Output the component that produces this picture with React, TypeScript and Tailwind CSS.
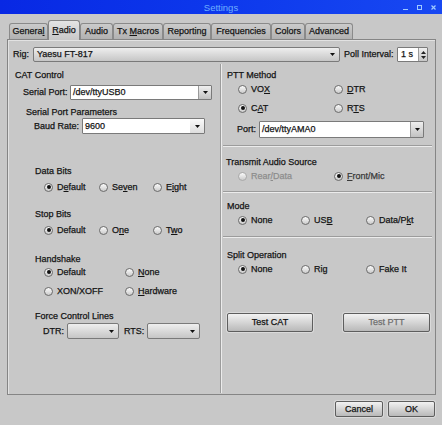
import React from "react";

function U({ children }: { children: React.ReactNode }) {
  return <span className="underline decoration-1 underline-offset-[1px]">{children}</span>;
}

function Arrow({ color = "#111" }: { color?: string }) {
  return (
    <svg width="5" height="3" viewBox="0 0 5 3" className="shrink-0">
      <path d="M0 0H5L2.5 3Z" fill={color} />
    </svg>
  );
}

function Radio({
  checked,
  disabled,
  dim,
  className = "",
  children,
}: {
  checked?: boolean;
  disabled?: boolean;
  dim?: boolean;
  className?: string;
  children: React.ReactNode;
}) {
  return (
    <div className={`flex h-full shrink-0 items-center ${className}`}>
      <span
        className={`flex h-[9px] w-[9px] shrink-0 items-center justify-center rounded-full border bg-linear-to-b from-[#fbfbfb] to-[#cbcbcb] ${
          disabled ? "border-[#a9a9a9]" : "border-[#6b6b6b]"
        }`}
      >
        {checked && <span className="h-[4px] w-[4px] rounded-full bg-[#111]" />}
      </span>
      <span
        className={`ml-[4px] whitespace-nowrap ${
          disabled ? "text-[#8d8d8d]" : dim ? "text-[#3a3a3a]" : ""
        }`}
      >
        {children}
      </span>
    </div>
  );
}

function Combo({ className = "", children }: { className?: string; children?: React.ReactNode }) {
  return (
    <div
      className={`flex shrink-0 items-center justify-between rounded-[2px] border border-[#7a7a7a] bg-linear-to-b from-[#eeeeee] to-[#c6c6c6] pl-[3px] pr-[4px] ${className}`}
    >
      <span className="whitespace-nowrap">{children}</span>
      <Arrow />
    </div>
  );
}

function EditCombo({
  className = "",
  light,
  children,
}: {
  className?: string;
  light?: boolean;
  children?: React.ReactNode;
}) {
  return (
    <div className={`flex shrink-0 rounded-[1px] border border-[#7a7a7a] bg-white ${className}`}>
      <span className="flex flex-1 items-center whitespace-nowrap pl-[2px]">{children}</span>
      {light ? (
        <span className="flex w-[14px] items-center justify-center bg-linear-to-b from-[#fafafa] to-[#dedede]">
          <Arrow />
        </span>
      ) : (
        <span className="flex w-[13px] items-center justify-center border-l border-[#9a9a9a] bg-linear-to-b from-[#efefef] to-[#c2c2c2]">
          <Arrow />
        </span>
      )}
    </div>
  );
}

function Button({
  className = "",
  disabled,
  children,
}: {
  className?: string;
  disabled?: boolean;
  children: React.ReactNode;
}) {
  return (
    <div
      className={`flex shrink-0 items-center justify-center rounded-[2px] border border-[#5e5e5e] bg-linear-to-b from-[#f2f2f2] to-[#b9b9b9] shadow-[0_0_0_1px_#dadada] ${
        disabled ? "text-[#6e6e6e]" : "text-[#111]"
      } ${className}`}
    >
      <span>{children}</span>
    </div>
  );
}

function Sep({ className = "" }: { className?: string }) {
  return <div className={`h-0 border-t border-b border-t-[#9c9c9c] border-b-[#ececec] ${className}`} />;
}

function Tab({ active, className = "", children }: { active?: boolean; className?: string; children: React.ReactNode }) {
  if (active) {
    return (
      <div
        className={`relative z-10 -mb-px flex h-[20px] shrink-0 items-center justify-center rounded-t-[3px] border border-b-0 border-[#858585] bg-linear-to-b from-[#e4e4e4] to-[#c8c8c8] ${className}`}
      >
        <span className="whitespace-nowrap">{children}</span>
      </div>
    );
  }
  return (
    <div
      className={`flex h-[16px] shrink-0 items-center justify-center rounded-t-[3px] border border-b-0 border-[#8a8a8a] bg-linear-to-b from-[#cbcbcb] to-[#b1b1b1] ${className}`}
    >
      <span className="whitespace-nowrap">{children}</span>
    </div>
  );
}

export default function App() {
  return (
    <div className="flex h-[425px] w-[442px] flex-col overflow-hidden bg-[#c8c8c8] font-['Liberation_Sans',Arial,sans-serif] text-[9px] leading-[11px] text-[#141414] [-webkit-text-stroke:0.25px_currentColor]">
      {/* Title bar */}
      <div className="grid h-[14px] shrink-0 grid-cols-[1fr_auto_1fr] items-center bg-linear-to-r from-[#0828e4] via-[#0d38ec] to-[#1848f2] [-webkit-text-stroke:0px]">
        <div />
        <span className="text-[9.5px] text-[#6eb0ff]">Settings</span>
        <div className="flex items-center justify-end gap-[9px] pr-[6px]">
          <span className="mt-[4px] h-[1px] w-[5px] bg-[#9fcaff]" />
          <span className="h-[5px] w-[5px] border border-[#9fcaff]" />
          <svg width="5" height="5" viewBox="0 0 5 5">
            <path d="M0.5 0.5L4.5 4.5M4.5 0.5L0.5 4.5" stroke="#9fcaff" strokeWidth="1.2" />
          </svg>
        </div>
      </div>

      {/* Tabs */}
      <div className="mt-[6px] flex h-[19px] shrink-0 items-end pl-[9px]">
        <Tab className="w-[39px]">
          Genera<U>l</U>
        </Tab>
        <Tab active className="w-[32px]">
          <U>R</U>adio
        </Tab>
        <Tab className="w-[33px]">Audio</Tab>
        <Tab className="w-[50px]">
          Tx <U>M</U>acros
        </Tab>
        <Tab className="w-[48px]">Reporting</Tab>
        <Tab className="w-[60px]">Frequencies</Tab>
        <Tab className="w-[34px]">Colors</Tab>
        <Tab className="w-[48px]">Advanced</Tab>
      </div>

      {/* Pane */}
      <div className="ml-[7px] flex h-[356px] w-[429px] shrink-0 flex-col border border-[#858585] shadow-[inset_1px_1px_0_#e2e2e2]">
        {/* Rig row */}
        <div className="mt-[7px] flex h-[15px] items-center pl-[5px]">
          <span className="w-[20px]">Rig:</span>
          <Combo className="h-[15px] w-[307px]">Yaesu FT-817</Combo>
          <span className="ml-[4px] w-[53px]">Poll Interval:</span>
          <div className="flex h-[15px] w-[31px] rounded-[1px] border border-[#7a7a7a] bg-white">
            <span className="flex flex-1 items-center pl-[3px]">1 s</span>
            <span className="flex w-[9px] flex-col items-center justify-center gap-[2px] border-l border-[#9a9a9a] bg-linear-to-b from-[#efefef] to-[#c6c6c6]">
              <svg width="5" height="3" viewBox="0 0 5 3">
                <path d="M0 3H5L2.5 0Z" fill="#222" />
              </svg>
              <svg width="5" height="3" viewBox="0 0 5 3">
                <path d="M0 0H5L2.5 3Z" fill="#222" />
              </svg>
            </span>
          </div>
        </div>

        {/* Columns */}
        <div className="mt-[2px] flex h-[329px]">
          {/* Left column */}
          <div className="flex w-[212px] shrink-0 flex-col">
            <div className="mt-[6px] h-[11px] pl-[7px]">CAT Control</div>
            <div className="mt-[4px] flex h-[15px] items-center pl-[15px]">
              <span className="w-[47px]">Serial Port:</span>
              <EditCombo className="h-[15px] w-[142px]">/dev/ttyUSB0</EditCombo>
            </div>
            <div className="mt-[7px] h-[11px] pl-[18px]">Serial Port Parameters</div>
            <div className="flex h-[16px] items-center pl-[26px]">
              <span className="w-[48px]">Baud Rate:</span>
              <EditCombo light className="h-[16px] w-[123px]">
                9600
              </EditCombo>
            </div>

            <div className="mt-[32px] h-[11px] pl-[27px]">Data Bits</div>
            <div className="mt-[4px] flex h-[12px] pl-[36px]">
              <Radio checked className="w-[55px]">
                D<U>e</U>fault
              </Radio>
              <Radio className="w-[54px]">
                Se<U>v</U>en
              </Radio>
              <Radio>
                E<U>i</U>ght
              </Radio>
            </div>

            <div className="mt-[16px] h-[11px] pl-[27px]">Stop Bits</div>
            <div className="mt-[4px] flex h-[12px] pl-[36px]">
              <Radio checked className="w-[55px]">
                Default
              </Radio>
              <Radio className="w-[54px]">
                O<U>n</U>e
              </Radio>
              <Radio>
                T<U>w</U>o
              </Radio>
            </div>

            <div className="mt-[18px] h-[11px] pl-[27px]">Handshake</div>
            <div className="mt-[1px] flex h-[12px] pl-[36px]">
              <Radio checked className="w-[81px]">
                Default
              </Radio>
              <Radio>
                <U>N</U>one
              </Radio>
            </div>
            <div className="mt-[7px] flex h-[12px] pl-[36px]">
              <Radio className="w-[81px]">XON/XOFF</Radio>
              <Radio>
                <U>H</U>ardware
              </Radio>
            </div>

            <div className="mt-[14px] h-[11px] pl-[27px]">Force Control Lines</div>
            <div className="mt-[1px] flex h-[16px] items-center pl-[35px]">
              <span className="w-[24px]">DTR:</span>
              <Combo className="h-[16px] w-[52px]" />
              <span className="ml-[5px] w-[23px]">RTS:</span>
              <Combo className="h-[16px] w-[53px]" />
            </div>
          </div>

          {/* Divider */}
          <div className="h-full w-0 border-l border-r border-l-[#9c9c9c] border-r-[#ececec]" />

          {/* Right column */}
          <div className="flex flex-1 flex-col">
            <div className="mt-[6px] h-[11px] pl-[5px]">PTT Method</div>
            <div className="mt-[2px] flex h-[12px] pl-[16px]">
              <Radio className="w-[96px]">
                VO<U>X</U>
              </Radio>
              <Radio>
                <U>D</U>TR
              </Radio>
            </div>
            <div className="mt-[7px] flex h-[12px] pl-[16px]">
              <Radio checked className="w-[96px]">
                C<U>A</U>T
              </Radio>
              <Radio>
                R<U>T</U>S
              </Radio>
            </div>
            <div className="mt-[7px] flex h-[17px] items-center pl-[15px]">
              <span className="w-[22px]">Port:</span>
              <EditCombo className="h-[17px] w-[165px]">/dev/ttyAMA0</EditCombo>
            </div>
            <Sep className="ml-[1px] mr-[3px] mt-[7px]" />

            <div className="mt-[10px] h-[11px] pl-[4px]">Transmit Audio Source</div>
            <div className="mt-[2px] flex h-[12px] pl-[16px]">
              <Radio disabled className="w-[96px]">
                Rear<U>/</U>Data
              </Radio>
              <Radio checked dim>
                <U>F</U>ront/Mic
              </Radio>
            </div>
            <Sep className="ml-[1px] mr-[3px] mt-[9px]" />

            <div className="mt-[8px] h-[11px] pl-[5px]">Mode</div>
            <div className="mt-[2px] flex h-[12px] pl-[16px]">
              <Radio checked className="w-[63px]">
                None
              </Radio>
              <Radio className="w-[65px]">
                US<U>B</U>
              </Radio>
              <Radio>
                Data/P<U>k</U>t
              </Radio>
            </div>
            <Sep className="ml-[1px] mr-[3px] mt-[10px]" />

            <div className="mt-[12px] h-[11px] pl-[5px]">Split Operation</div>
            <div className="mt-[2px] flex h-[12px] pl-[16px]">
              <Radio checked className="w-[63px]">
                None
              </Radio>
              <Radio className="w-[65px]">Rig</Radio>
              <Radio>Fake It</Radio>
            </div>

            <div className="mt-[38px] flex h-[19px] pl-[5px]">
              <Button className="h-[19px] w-[86px]">Test CAT</Button>
              <Button disabled className="ml-[30px] h-[19px] w-[87px]">
                Test PTT
              </Button>
            </div>
          </div>
        </div>
      </div>

      {/* Bottom buttons */}
      <div className="mt-[6px] flex h-[16px] shrink-0 justify-end gap-[5px] pr-[7px]">
        <Button className="h-[16px] w-[48px]">Cancel</Button>
        <Button className="h-[16px] w-[47px]">OK</Button>
      </div>
    </div>
  );
}
